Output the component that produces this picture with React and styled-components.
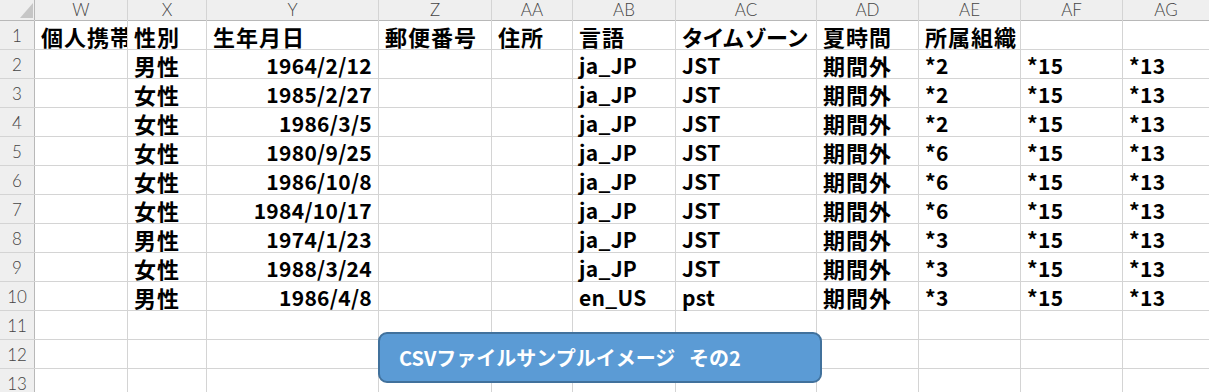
import styled, { createGlobalStyle } from "styled-components"

const columns = ["W", "X", "Y", "Z", "AA", "AB", "AC", "AD", "AE", "AF", "AG"]

const heading = ["個人携帯", "性別", "生年月日", "郵便番号", "住所", "言語", "タイムゾーン", "夏時間", "所属組織", "", ""]

const people = [
  ["男性", "1964/2/12", "ja_JP", "JST", "*2"],
  ["女性", "1985/2/27", "ja_JP", "JST", "*2"],
  ["女性", "1986/3/5", "ja_JP", "JST", "*2"],
  ["女性", "1980/9/25", "ja_JP", "JST", "*6"],
  ["女性", "1986/10/8", "ja_JP", "JST", "*6"],
  ["女性", "1984/10/17", "ja_JP", "JST", "*6"],
  ["男性", "1974/1/23", "ja_JP", "JST", "*3"],
  ["女性", "1988/3/24", "ja_JP", "JST", "*3"],
  ["男性", "1986/4/8", "en_US", "pst", "*3"],
]

// full-width text gets a little more room, like the sheet's gothic font
const isWide = (text) => /[^\x00-\x7f]/.test(text)

const GlobalStyle = createGlobalStyle`
  html, body {
    margin: 0;
    background: #ffffff;
    overflow: hidden;
  }
`

const App = () => {
  const rows = [
    heading,
    ...people.map(([sex, born, lang, tz, org]) => ["", sex, born, "", "", lang, tz, "期間外", org, "*15", "*13"]),
    Array(11).fill(""),
    Array(11).fill(""),
    Array(11).fill(""),
  ]

  return (
    <Sheet>
      <GlobalStyle />
      <Grid>
        <Corner />
        {columns.map((c) => (
          <ColHead key={c}>{c}</ColHead>
        ))}
        {rows.map((row, r) => [
          <RowHead key={`h${r}`}>{r + 1}</RowHead>,
          ...row.map((value, c) => (
            <Cell key={`${r}-${c}`} $right={r > 0 && c === 2} $wide={isWide(value)}>
              {value}
            </Cell>
          )),
        ])}
      </Grid>
      <Callout>CSVファイルサンプルイメージ&nbsp;&nbsp;&nbsp;その2</Callout>
    </Sheet>
  )
}

const Sheet = styled.div`
  position: relative;
  width: 1209px;
  height: 392px;
  overflow: hidden;
`

/* gridlines are the 1px gaps showing the grid's own background */
const Grid = styled.div`
  display: grid;
  grid-template-columns: 34px 92px 78px 171px 112px 80px 102px 140px 101px 101px 101px 1fr;
  grid-template-rows: 20px repeat(13, 28px);
  gap: 1px;
  background: #d4d4d4;
`

const Corner = styled.div`
  position: relative;
  background: #efefef;
  box-shadow: 0 1px 0 #b8b8b8, 1px 0 0 #b8b8b8;

  &::after {
    content: "";
    position: absolute;
    left: 20px;
    top: 3px;
    width: 13px;
    height: 15px;
    background: #c6c6c6;
    clip-path: polygon(100% 0, 100% 100%, 0 100%);
  }
`

const ColHead = styled.div`
  display: flex;
  align-items: center;
  justify-content: center;
  background: #efefef;
  box-shadow: 0 1px 0 #b8b8b8;
  font-family: Lato, "Open Sans", "Liberation Sans", sans-serif;
  font-weight: 300;
  font-size: 17px;
  line-height: 18px;
  color: #444444;
`

const RowHead = styled.div`
  display: flex;
  align-items: center;
  justify-content: center;
  background: #efefef;
  box-shadow: 1px 0 0 #b8b8b8;
  font-family: Lato, "Open Sans", "Liberation Sans", sans-serif;
  font-weight: 300;
  font-size: 17px;
  color: #444444;
`

/* text running past the right edge is cut there, as in a sheet cell */
const Cell = styled.div`
  display: flex;
  align-items: flex-end;
  justify-content: ${(p) => (p.$right ? "flex-end" : "flex-start")};
  padding: 0 6px 0 6px;
  background: #ffffff;
  clip-path: inset(-8px 0 -8px -8px);
  white-space: nowrap;
  font-family: "Noto Sans CJK JP", sans-serif;
  font-weight: 700;
  font-size: ${(p) => (p.$wide ? "22px" : "21px")};
  letter-spacing: ${(p) => (p.$wide ? "1px" : "0.3px")};
  font-feature-settings: ${(p) => (p.$wide ? '"palt"' : "normal")};
  line-height: 26px;
  color: #000000;
`

const Callout = styled.div`
  position: absolute;
  left: 378px;
  top: 332px;
  width: 444px;
  height: 51px;
  box-sizing: border-box;
  display: flex;
  align-items: center;
  padding-left: 19px;
  background: #5b9bd5;
  border: 2px solid #41719c;
  border-radius: 9px;
  font-family: "Noto Sans CJK JP", sans-serif;
  font-weight: 700;
  font-size: 20px;
  color: #ffffff;
`

export default App
